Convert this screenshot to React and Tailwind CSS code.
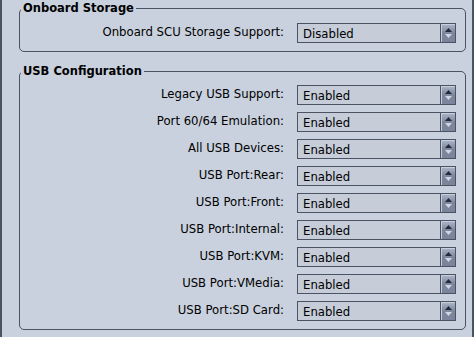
import React from "react";

const usbRows = [
  ["Legacy USB Support:", "Enabled"],
  ["Port 60/64 Emulation:", "Enabled"],
  ["All USB Devices:", "Enabled"],
  ["USB Port:Rear:", "Enabled"],
  ["USB Port:Front:", "Enabled"],
  ["USB Port:Internal:", "Enabled"],
  ["USB Port:KVM:", "Enabled"],
  ["USB Port:VMedia:", "Enabled"],
  ["USB Port:SD Card:", "Enabled"],
];

function Spinner() {
  return (
    <div className="w-[15px] h-full flex flex-col items-center justify-center gap-[2px] bg-gradient-to-b from-[#aeb7ca] via-[#7c879e] to-[#7a859c] border-l border-[#4b5262] shadow-[inset_1px_1px_0_#c8cfdc]">
      <svg width="7" height="4" viewBox="0 0 7 4"><path d="M3.5 0L7 4H0z" fill="#232a3a" /></svg>
      <svg width="7" height="4" viewBox="0 0 7 4"><path d="M0 0h7L3.5 4z" fill="#cfd5e1" /></svg>
    </div>
  );
}

function Row({ label, value }) {
  return (
    <div className="flex items-center h-[20px]">
      <div className="w-[277px] text-right pr-[13px] text-[11.7px] text-black whitespace-nowrap">{label}</div>
      <div className="w-[159px] h-[20px] flex border border-[#4b5262] bg-[#c6cdd9]">
        <div className="flex-1 pl-[5px] text-[11.7px] leading-[18px] pt-[1px] text-black">{value}</div>
        <Spinner />
      </div>
    </div>
  );
}

function Group({ title, children, className }) {
  return (
    <fieldset className={"border border-[#4b5262] rounded-[5px] ml-[17px] w-[447px] " + className}>
      <legend className="ml-[1px] px-[2px] text-[11.5px] font-bold text-black leading-[12px]">{title}</legend>
      {children}
    </fieldset>
  );
}

export default function App() {
  return (
    <div className="w-[474px] h-[337px] bg-[#c9d1de] border-l-2 border-r-2 border-[#4b5262] pt-[2px] overflow-hidden" style={{ fontFamily: '"DejaVu Sans", Verdana, sans-serif' }}>
      <Group title="Onboard Storage" className="pt-[9px] pb-[8px]">
        <Row label="Onboard SCU Storage Support:" value="Disabled" />
      </Group>
      <Group title="USB Configuration" className="mt-[13px] pt-[8px] pb-[8px]">
        <div className="flex flex-col gap-[7px]">
          {usbRows.map(([l, v]) => (
            <Row key={l} label={l} value={v} />
          ))}
        </div>
      </Group>
    </div>
  );
}
